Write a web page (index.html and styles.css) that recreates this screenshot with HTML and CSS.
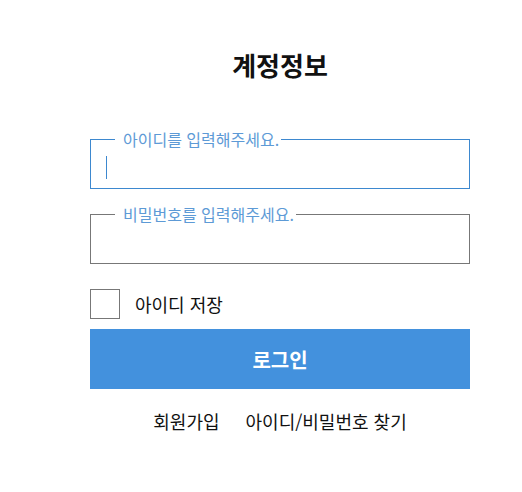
FILE: index.html
```html
<!DOCTYPE html>
<html lang="ko">
<head>
<meta charset="utf-8">
<link rel="stylesheet" href="styles.css">
</head>
<body>
<main class="login">
  <h1 class="title">계정정보</h1>
  <form class="form">
    <fieldset class="field field-active">
      <legend class="legend">아이디를 입력해주세요.</legend>
      <div class="control">
        <span class="caret"></span>
        <input class="input" type="text">
      </div>
    </fieldset>
    <fieldset class="field">
      <legend class="legend">비밀번호를 입력해주세요.</legend>
      <div class="control">
        <input class="input" type="password">
      </div>
    </fieldset>
    <label class="remember">
      <span class="box"></span>
      <span class="remember-text">아이디 저장</span>
    </label>
    <button class="btn" type="button">로그인</button>
  </form>
  <nav class="links">
    <a class="link">회원가입</a>
    <a class="link">아이디/비밀번호 찾기</a>
  </nav>
</main>
</body>
</html>
```
FILE: styles.css
```css
* { box-sizing: border-box; }
html, body { margin: 0; padding: 0; background: #fff; }
body {
  font-family: "Noto Sans CJK KR", "Noto Sans", sans-serif;
  color: #111;
}
.login {
  width: 380px;
  margin-left: 90px;
  padding-top: 47px;
}
.title {
  margin: 0;
  font-size: 26px;
  line-height: 36px;
  font-weight: 700;
  text-align: center;
  color: #111;
}
.form {
  display: flex;
  flex-direction: column;
  margin-top: 47px;
}
.field {
  margin: 0;
  padding: 0 0 0 15px;
  border: 1px solid #777;
  height: 59px;
  min-width: 0;
}
.field + .field { margin-top: 16px; }
.field-active { border-color: #3d88cf; }
.legend {
  margin-left: 9px;
  padding: 0 2px 0 8px;
  font-size: 16px;
  line-height: 18px;
  color: #5d9ad6;
}
.control {
  display: flex;
  align-items: center;
  height: 38px;
  padding-top: 0;
}
.caret {
  flex: none;
  width: 1px;
  height: 23px;
  background: #3d88cf;
}
.input {
  flex: 1;
  min-width: 0;
  border: 0;
  outline: none;
  padding: 0;
  height: 26px;
  font-size: 20px;
  font-family: inherit;
  background: transparent;
}
.remember {
  display: flex;
  align-items: center;
  gap: 15px;
  margin-top: 25px;
}
.box {
  width: 30px;
  height: 30px;
  border: 1px solid #777;
}
.remember-text {
  font-size: 18px;
  line-height: 24px;
}
.btn {
  margin-top: 10px;
  height: 60px;
  border: 0;
  background: #4391dd;
  color: #fff;
  font-family: inherit;
  font-size: 20px;
  font-weight: 700;
}
.links {
  display: flex;
  justify-content: center;
  gap: 26px;
  margin-top: 20px;
}
.link {
  font-size: 18px;
  line-height: 24px;
  color: #111;
}
```
